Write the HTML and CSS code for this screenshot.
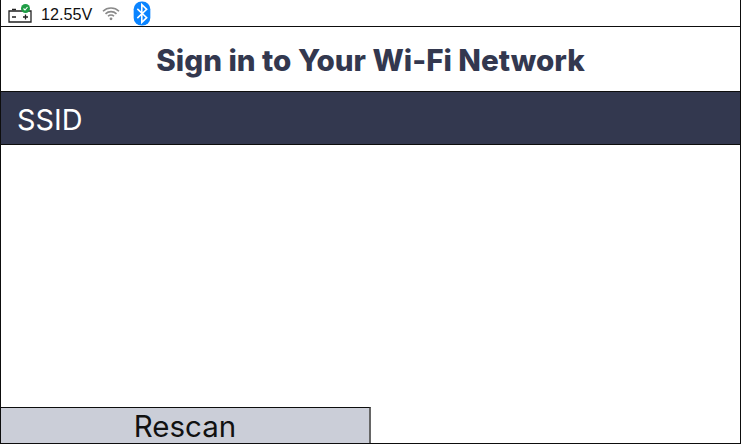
FILE: index.html
```html
<!DOCTYPE html>
<html lang="en">
<head>
<meta charset="utf-8">
<title>Sign in to Your Wi-Fi Network</title>
<link rel="stylesheet" href="styles.css">
</head>
<body>
<div class="screen">
  <div class="status">
    <svg class="battery" width="26" height="20" viewBox="0 0 26 20">
      <path d="M1 8h22v11H1z" fill="#fff" stroke="#222" stroke-width="1.300"/>
      <path d="M4 6.500h4M16 6.500h4" stroke="#222" stroke-width="1.600"/>
      <path d="M4 14h4M15 14h5M17.500 11.500v5" stroke="#222" stroke-width="1.300" fill="none"/>
      <circle cx="17.500" cy="5.500" r="4.500" fill="#1f9d45"/>
      <path d="M15.500 5.500l1.500 1.500 2.500-3" stroke="#fff" stroke-width="1.100" fill="none"/>
    </svg>
    <span class="volts">12.55V</span>
    <svg class="wifi" width="18" height="15" viewBox="0 0 18 15">
      <g fill="none" stroke="#8a8a8a" stroke-width="1.600">
        <path d="M1 5.200a11.500 11.500 0 0 1 16 0"/>
        <path d="M3.500 7.800a8 8 0 0 1 11 0"/>
        <path d="M6 10.300a4.300 4.300 0 0 1 6 0"/>
      </g>
      <circle cx="9" cy="12.800" r="1.400" fill="#8a8a8a"/>
    </svg>
    <svg class="bt" width="18" height="25" viewBox="0 0 17 24">
      <rect x="0.500" y="0.500" width="16" height="23" rx="7.500" fill="#0a84ff"/>
      <path d="M4 7.500l9 8.500-4.700 4.500V3.500L13 8l-9 8.500" fill="none" stroke="#fff" stroke-width="1.500"/>
    </svg>
  </div>
  <h1 class="title">Sign in to Your Wi-Fi Network</h1>
  <div class="ssid">SSID</div>
  <div class="list"></div>
  <div class="actions"><button class="rescan" type="button">Rescan</button></div>
</div>
</body>
</html>
```
FILE: styles.css
```css
html, body {
  margin: 0;
  padding: 0;
  background: #fff;
}
.screen {
  box-sizing: border-box;
  width: 741px;
  height: 444px;
  display: flex;
  flex-direction: column;
  border: solid #0d0d0d;
  border-width: 0 1px 1px 1px;
  font-family: Inter, "Liberation Sans", sans-serif;
  overflow: hidden;
}
.status {
  box-sizing: border-box;
  height: 27px;
  flex: none;
  display: flex;
  align-items: center;
  padding-left: 7px;
  border-bottom: 1px solid #0d0d0d;
}
.battery { flex: none; }
.volts {
  margin-left: 7px;
  padding-top: 2px;
  font-family: "Liberation Sans", Arial, sans-serif;
  font-size: 16.200px;
  color: #111;
}
.wifi { flex: none; margin-left: 10px; }
.bt { flex: none; margin-left: 13px; }
.title {
  box-sizing: border-box;
  margin: 0;
  height: 64px;
  padding-top: 2px;
  flex: none;
  display: flex;
  align-items: center;
  justify-content: center;
  font-size: 29.600px;
  font-weight: 800;
  color: #33384f;
}
.ssid {
  box-sizing: border-box;
  height: 54px;
  flex: none;
  display: flex;
  align-items: center;
  padding-left: 16px;
  padding-top: 3px;
  background: #33384f;
  border-top: 1px solid #0d0d0d;
  border-bottom: 1px solid #0d0d0d;
  color: #fff;
  font-size: 28.800px;
}
.list { flex: 1; }
.actions { flex: none; display: flex; }
.rescan {
  box-sizing: border-box;
  width: 370px;
  height: 36px;
  padding: 1px 0 0;
  margin: 0;
  background: #cbced8;
  border: solid #0d0d0d;
  border-width: 1px 0 0 0;
  border-right: 2px solid #666;
  color: #111;
  font-family: Inter, "Liberation Sans", sans-serif;
  font-size: 29.500px;
  line-height: 34px;
}
```
